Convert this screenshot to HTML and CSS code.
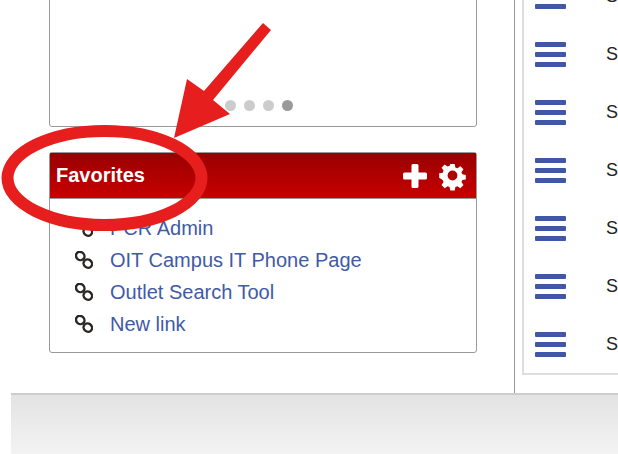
FILE: index.html
```html
<!DOCTYPE html>
<html lang="en">
<head>
<meta charset="utf-8">
<title>Favorites</title>
<link rel="stylesheet" href="styles.css">
</head>
<body>
<div class="page">
  <div class="content">
    <div class="left">
      <section class="card carousel">
        <div class="dots">
          <span class="dot"></span>
          <span class="dot"></span>
          <span class="dot"></span>
          <span class="dot active"></span>
        </div>
      </section>
      <section class="card favorites">
        <header class="fav-head">
          <h2 class="fav-title">Favorites</h2>
          <div class="fav-tools">
            <svg class="plus" viewBox="0 0 24 24" aria-hidden="true"><path d="M8.500 1.500q0-1.500 1.500-1.500h4q1.500 0 1.500 1.500V8.500h7q1.500 0 1.500 1.500v4q0 1.500-1.500 1.500h-7v7q0 1.500-1.500 1.500h-4q-1.500 0-1.500-1.500v-7h-7Q0 15.500 0 14v-4q0-1.500 1.500-1.500h7z"/></svg>
            <svg class="gear" viewBox="0 0 28 28" aria-hidden="true"><path fill-rule="evenodd" d="M11.500 1h5l.7 3.900 2.300 1 3.300-2.300 3.500 3.500-2.300 3.300 1 2.300 3.900.7v5l-3.900.7-1 2.300 2.300 3.300-3.500 3.500-3.300-2.300-2.300 1-.7 3.900h-5l-.7-3.900-2.300-1-3.300 2.300-3.500-3.500 2.300-3.300-1-2.300L-.9 16.500v-5l3.900-.7 1-2.300L1.700 5.200l3.500-3.500 3.300 2.300 2.300-1zM14 8.500a5.500 5.500 0 1 0 0 11 5.500 5.500 0 0 0 0-11z"/></svg>
          </div>
        </header>
        <ul class="fav-list">
          <li class="fav-item"><svg class="chain" viewBox="0 0 18 18" aria-hidden="true"><g><ellipse cx="5.200" cy="5" rx="4.400" ry="4" transform="rotate(40 5.200 5)"/><ellipse cx="12.800" cy="12.600" rx="4.400" ry="4" transform="rotate(40 12.800 12.600)"/></g></svg><a class="fav-link">PCR Admin</a></li>
          <li class="fav-item"><svg class="chain" viewBox="0 0 18 18" aria-hidden="true"><g><ellipse cx="5.200" cy="5" rx="4.400" ry="4" transform="rotate(40 5.200 5)"/><ellipse cx="12.800" cy="12.600" rx="4.400" ry="4" transform="rotate(40 12.800 12.600)"/></g></svg><a class="fav-link">OIT Campus IT Phone Page</a></li>
          <li class="fav-item"><svg class="chain" viewBox="0 0 18 18" aria-hidden="true"><g><ellipse cx="5.200" cy="5" rx="4.400" ry="4" transform="rotate(40 5.200 5)"/><ellipse cx="12.800" cy="12.600" rx="4.400" ry="4" transform="rotate(40 12.800 12.600)"/></g></svg><a class="fav-link">Outlet Search Tool</a></li>
          <li class="fav-item"><svg class="chain" viewBox="0 0 18 18" aria-hidden="true"><g><ellipse cx="5.200" cy="5" rx="4.400" ry="4" transform="rotate(40 5.200 5)"/><ellipse cx="12.800" cy="12.600" rx="4.400" ry="4" transform="rotate(40 12.800 12.600)"/></g></svg><a class="fav-link">New link</a></li>
        </ul>
      </section>
    </div>
    <div class="right">
      <div class="panel">
        <div class="row"><div class="burger"><i></i><i></i><i></i></div><span class="row-text">S</span></div>
        <div class="row"><div class="burger"><i></i><i></i><i></i></div><span class="row-text">S</span></div>
        <div class="row"><div class="burger"><i></i><i></i><i></i></div><span class="row-text">S</span></div>
        <div class="row"><div class="burger"><i></i><i></i><i></i></div><span class="row-text">S</span></div>
        <div class="row"><div class="burger"><i></i><i></i><i></i></div><span class="row-text">S</span></div>
        <div class="row"><div class="burger"><i></i><i></i><i></i></div><span class="row-text">S</span></div>
        <div class="row"><div class="burger"><i></i><i></i><i></i></div><span class="row-text">S</span></div>
      </div>
    </div>
  </div>
  <footer class="footer"></footer>
  <svg class="annotation" viewBox="0 0 618 454" aria-hidden="true">
    <ellipse class="ring" cx="104.500" cy="178" rx="97" ry="47"/>
    <polygon class="arrow" points="263,23 271,30 213,100 230,114 174,138 187,79 204,91"/>
  </svg>
</div>
</body>
</html>
```
FILE: styles.css
```css
* { box-sizing: border-box; }
html, body { margin: 0; padding: 0; background: #fff; }
body { font-family: "Liberation Sans", Arial, sans-serif; }

.page { position: relative; width: 618px; height: 454px; overflow: hidden; }
.content { display: flex; height: 393px; overflow: hidden; }

.left { width: 515px; flex: none; padding: 0 37px 0 49px; border-right: 1px solid #999; }
.right { flex: 1; min-width: 0; padding-left: 7px; overflow: hidden; }

.card { border: 1px solid #999; border-radius: 3px; background: #fff; }
.carousel { height: 137px; margin-top: -10px; display: flex; align-items: flex-end; justify-content: center; padding: 0 9px 15px 0; }
.dots { display: flex; gap: 8px; }
.dot { width: 11px; height: 11px; border-radius: 50%; background: #ccc; }
.dot.active { background: #999; }

.favorites { margin-top: 25px; height: 201px; }
.fav-head { height: 46px; display: flex; align-items: center; justify-content: space-between; padding: 0 11px 0 6px; border-bottom: 1px solid #999; background: linear-gradient(#980000, #c80000); }
.fav-title { margin: 0; color: #fff; font-size: 20px; font-weight: 700; }
.fav-tools { display: flex; align-items: center; gap: 13px; }
.plus { width: 24px; height: 24px; fill: #fff; }
.gear { width: 25px; height: 25px; fill: #fff; overflow: visible; }

.fav-list { list-style: none; margin: 0; padding: 13px 0 0 25px; }
.fav-item { height: 32px; display: flex; align-items: center; gap: 17px; }
.chain { width: 18px; height: 18px; flex: none; fill: none; stroke: #2a2622; stroke-width: 2.400; }
.fav-link { color: #3f5aa6; font-size: 20px; white-space: nowrap; }

.panel { margin-top: -33px; border-left: 2px solid #ddd; border-bottom: 2px solid #ddd; width: 120px; }
.row { height: 58px; display: flex; align-items: flex-start; gap: 40px; padding: 17px 0 0 11px; }
.burger { width: 31px; flex: none; display: flex; flex-direction: column; gap: 5px; }
.burger i { display: block; height: 5px; border-radius: 1px; background: #3f57a6; }
.row-text { color: #222; font-size: 18px; line-height: 25px; }

.footer { height: 61px; margin-left: 11px; border-top: 2px solid #ccc; background: linear-gradient(#e3e3e3, #f3f3f3); }

.annotation { position: absolute; left: 0; top: 0; width: 618px; height: 454px; pointer-events: none; }
.ring { fill: none; stroke: #e61e1e; stroke-width: 12; }
.arrow { fill: #e61e1e; }
```
